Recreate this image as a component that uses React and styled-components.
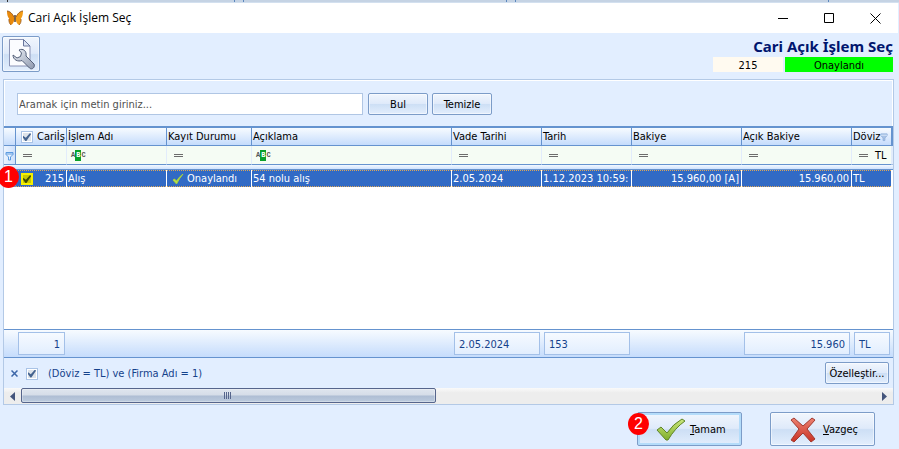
import React from 'react';
import styled, { createGlobalStyle, css } from 'styled-components';

const GlobalStyle = createGlobalStyle`
  *, *::before, *::after {
    box-sizing: border-box;
  }

  body {
    margin: 0;
    background: #e2eeff;
    color: #000;
    font: 11px/14px "DejaVu Sans Condensed", "DejaVu Sans", sans-serif;
  }

  button, input {
    font: inherit;
    color: inherit;
    margin: 0;
  }
`;

const COLUMNS = [
  { key: 'id', title: 'Cariİş', width: 51, align: 'right', value: '215', summary: '1', checkbox: true },
  { key: 'name', title: 'İşlem Adı', width: 100, value: 'Alış', filter: 'text' },
  { key: 'status', title: 'Kayıt Durumu', width: 85, value: 'Onaylandı', tick: true },
  { key: 'description', title: 'Açıklama', width: 200, value: '54 nolu alış', filter: 'text' },
  { key: 'due', title: 'Vade Tarihi', width: 90, value: '2.05.2024', summary: '2.05.2024' },
  { key: 'date', title: 'Tarih', width: 90, value: '1.12.2023 10:59:', summary: '153' },
  { key: 'balance', title: 'Bakiye', width: 110, align: 'right', value: '15.960,00 [A]' },
  { key: 'open', title: 'Açık Bakiye', width: 110, align: 'right', value: '15.960,00', summary: '15.960' },
  { key: 'currency', title: 'Döviz', width: 40, value: 'TL', summary: 'TL', filterValue: 'TL', filtered: true }
];

const Page = styled.div`
  display: flex;
  flex-direction: column;
  min-height: 100vh;
  padding-right: 1px;
`;

const Backdrop = styled.div`
  display: flex;
  gap: 8px;
  height: 3px;
  margin-right: -1px;
  padding-left: 7px;
  background: #c5d3e4;
  border-bottom: 1px solid #d3e0ef;
`;

const BackdropTab = styled.div`
  flex: 0 0 ${(props) => props.$width}px;
  border-right: 1px solid #5c87bd;
  border-left: 1px solid ${(props) => props.$edge || '#5c87bd'};
`;

const TitleBar = styled.header`
  display: flex;
  align-items: center;
  height: 30px;
  padding-left: 7px;
  gap: 5px;
  background: #fff;
`;

const WindowTitle = styled.span`
  flex: 1;
  font: 12px/16px "Open Sans", "Noto Sans", sans-serif;
`;

const WindowControls = styled.div`
  display: flex;
`;

const WindowButton = styled.button`
  display: flex;
  align-items: center;
  justify-content: center;
  width: 46px;
  height: 30px;
  padding: 0;
  border: 0;
  background: none;
`;

const Toolbar = styled.div`
  display: flex;
  justify-content: space-between;
  height: 46px;
  padding: 3px 5px 0 2px;
`;

const buttonFace = css`
  border: 1px solid #7c9cc8;
  border-radius: 2px;
  background: linear-gradient(#f1f6fd 0%, #dfeafa 48%, #cddff5 52%, #e3eefd 100%);
  box-shadow: inset 0 0 0 1px rgba(255, 255, 255, 0.5);
`;

const ToolButton = styled.button`
  ${buttonFace}
  display: flex;
  align-items: center;
  justify-content: center;
  width: 38px;
  height: 36px;
  padding: 0;
`;

const Heading = styled.div`
  display: flex;
  flex-direction: column;
  width: 180px;
`;

const HeadingTitle = styled.h1`
  margin: 0;
  color: #00156e;
  font: bold 15px/21px "Noto Sans", "Open Sans", sans-serif;
  text-align: right;
  white-space: nowrap;
`;

const Tags = styled.div`
  display: flex;
  gap: 2px;
`;

const Tag = styled.div`
  flex: ${(props) => props.$flex};
  height: 15px;
  background: ${(props) => props.$color};
  line-height: 17px;
  text-align: center;
`;

const Panel = styled.main`
  flex: 1;
  display: flex;
  flex-direction: column;
  margin: 0 4px 0 3px;
  border: 1px solid #b3c9e6;
`;

const SearchBar = styled.form`
  display: flex;
  gap: 4px;
  height: 46px;
  padding: 13px 13px 0;
  box-shadow: inset -1px 1px #fff, inset 1px 0 #fff;
`;

const SearchInput = styled.input`
  width: 346px;
  height: 22px;
  margin-right: 1px;
  padding: 0 1px;
  border: 1px solid #b0c6e4;
  background: #fff;

  &::placeholder {
    color: #505050;
    opacity: 1;
  }
`;

const Button = styled.button`
  ${buttonFace}
  width: ${(props) => props.$width}px;
  height: 22px;
  padding: 1px 0 0;
  white-space: nowrap;
`;

const GridArea = styled.div`
  position: relative;
  flex: 1;
  border-top: 2px solid #6593cf;
  background: #fff;
`;

const GridClip = styled.div`
  overflow: hidden;
`;

const Table = styled.table`
  width: 100%;
  border-spacing: 0;
  table-layout: fixed;

  th, td {
    padding: 0;
    overflow: hidden;
    font-weight: normal;
    white-space: nowrap;
  }
`;

const HeaderCell = styled.th`
  height: 18px;
  border-right: 1px solid #6593cf;
  border-bottom: 1px solid #6593cf;
  background: linear-gradient(#f7fbff, #c5dcfc);
  text-align: left;
`;

const CellContent = styled.div`
  display: flex;
  align-items: center;
  justify-content: ${(props) => props.$align === 'right' ? 'flex-end' : 'flex-start'};
  gap: ${(props) => props.$gap || 0}px;
  padding: 1px ${(props) => props.$right || 0}px 0 ${(props) => props.$left || 0}px;
  overflow: hidden;
`;

const FilterCell = styled.td`
  height: 19px;
  border-right: 1px solid #e2ecfb;
  border-bottom: 1px solid #6593cf;
  background: #f5fcf4;
`;

const IndicatorCell = styled(FilterCell)`
  border-right-color: #6593cf;
  background: linear-gradient(90deg, #eaf3ff, #cfe1fb);
`;

const BandCell = styled.td`
  height: 5px;
  border-bottom: 1px solid #6593cf;
  background: linear-gradient(#f2f8ff, #cfe2fd);
`;

const dots = 'repeating-linear-gradient(90deg, #dca658 0 1px, #316ac5 1px 2px)';

const DataCell = styled.td`
  height: 17px;
  border-right: 1px solid #fff;
  background:
    ${dots} top / 100% 1px no-repeat,
    ${dots} bottom / 100% 1px no-repeat,
    #316ac5;
  color: #fff;
`;

const RowIndicatorCell = styled.td`
  height: 17px;
  border-right: 1px solid #6593cf;
  border-bottom: 1px solid #6593cf;
  background: linear-gradient(90deg, #eaf3ff, #cfe1fb);
`;

const TextOperator = styled.span`
  display: flex;
  align-items: center;
  color: #555;
  font: bold 7px/9px "Liberation Mono", monospace;
`;

const OperatorLetter = styled.span`
  padding: 0 1px;
  background: #0aa02a;
  color: #fff;
  line-height: 11px;
`;

const EqualsOperator = styled.span`
  width: 9px;
  height: 3px;
  border: solid #6c6c6c;
  border-width: 1px 0;
`;

const Checkbox = styled.input.attrs({ type: 'checkbox' })`
  appearance: none;
  flex: none;
  display: grid;
  place-items: center;
  width: 12px;
  height: 12px;
  border: 1px solid #a9c3e6;
  background: #dde3ea;
  box-shadow: inset 0 0 0 1px #fff;

  &:checked::after {
    content: "";
    width: 8px;
    height: 8px;
    background: #44638f;
    clip-path: polygon(0 35%, 35% 60%, 88% 0, 100% 15%, 42% 100%, 30% 100%, 0 60%);
  }

  ${(props) => props.$marked && css`
    border-color: #f5f000;
    background: #c8c800;
    box-shadow: inset 0 0 0 1px #f5f000;

    &:checked::after {
      background: #3c4c00;
    }
  `}
`;

const SummaryTable = styled(Table)`
  border: solid #6593cf;
  border-width: 1px 0;
  background: linear-gradient(#f7fbff, #c5dcfc);
`;

const SummaryCell = styled.td`
  height: 27px;
`;

const SummaryBox = styled.div`
  height: 23px;
  margin: 0 2px;
  padding: 0 4px;
  border: 1px solid #a3c0e8;
  background: linear-gradient(#f6faff, #e2eefe);
  color: #15428b;
  line-height: 23px;
  text-align: ${(props) => props.$align || 'left'};
`;

const FilterBar = styled.div`
  display: flex;
  align-items: center;
  gap: 8px;
  height: 30px;
  padding: 0 4px 0 7px;
  color: #15428b;
`;

const FilterLabel = styled.label`
  flex: 1;
  display: flex;
  align-items: center;
  gap: 10px;
  padding-top: 1px;
`;

const CloseButton = styled.button`
  display: flex;
  padding: 0;
  border: 0;
  background: none;
`;

const CustomizeButton = styled(Button)`
  color: #000;
`;

const ScrollBar = styled.div`
  display: flex;
  height: 16px;
  background: linear-gradient(#fafafa, #ededed 30%);
`;

const ScrollArrow = styled.button`
  display: flex;
  align-items: center;
  justify-content: center;
  width: 17px;
  height: 16px;
  padding: 0;
  border: 0;
  background: none;
`;

const ScrollTrack = styled.div`
  flex: 1;
`;

const ScrollThumb = styled.div`
  display: flex;
  align-items: center;
  justify-content: center;
  width: 48.5%;
  height: 15px;
  border: 1px solid #56658c;
  border-radius: 2px;
  background: linear-gradient(#dfe5ee 0%, #d5dde8 48%, #aebdd3 52%, #bccbde 100%);
  box-shadow: inset 0 0 0 1px rgba(255, 255, 255, 0.3);
`;

const Actions = styled.footer`
  display: flex;
  justify-content: flex-end;
  gap: 28px;
  height: 44px;
  padding: 7px 23px 0 0;
`;

const ActionSlot = styled.div`
  position: relative;
`;

const ActionButton = styled.button`
  ${buttonFace}
  display: flex;
  align-items: center;
  gap: 4px;
  width: 105px;
  height: 34px;
  padding: 1px 0 0 18px;

  ${(props) => props.$primary && css`
    box-shadow: inset 0 0 0 2px #b4dcfa;
  `}
`;

const StepMarker = styled.span`
  position: absolute;
  top: ${(props) => props.$top}px;
  left: ${(props) => props.$left}px;
  width: 21px;
  height: 22px;
  border-radius: 50%;
  background: #f00;
  color: #fff;
  font: 16px/22px "Liberation Sans", sans-serif;
  text-align: center;
`;

const ButterflyIcon = () => (
  <svg width="16" height="16" viewBox="0 0 16 16">
    <path d="M7.5 8C6 4 3 1 0 1c0 3 .5 6 2 7.5C1.500 11 2.500 14 4 15c2-1 3.500-4 3.500-7z" fill="#e8890c" />
    <path d="M8.5 8C10 4 13 1 16 1c0 3-.5 6-2 7.5.5 2.500-.5 5.500-2 6.500-2-1-3.500-4-3.500-7z" fill="#f39c17" />
    <path d="M0 1c3 0 5.500 3 7 6M16 1c-3 0-5.500 3-7 6" stroke="#8a4a12" fill="none" strokeWidth=".8" />
    <path d="M2 9c-.5 2 .5 5 2 6M14 9c.5 2-.5 5-2 6" stroke="#8a4a12" fill="none" strokeWidth=".7" />
    <path d="M8 5v7" stroke="#3e2413" strokeWidth="1.3" />
  </svg>
);

const SettingsIcon = () => (
  <svg width="28" height="32" viewBox="0 0 28 32">
    <defs>
      <linearGradient id="wrench" x1="0" y1="0" x2="1" y2="1">
        <stop offset="0" stopColor="#eef1f7" />
        <stop offset="1" stopColor="#8d98ae" />
      </linearGradient>
    </defs>
    <path d="M2.5 1.5h14l6.5 6.5v20h-20.500z" fill="#fbfcff" stroke="#8a93b5" />
    <path d="M16.5 1.5v6.500h6.500z" fill="#dde5f4" stroke="#6a769d" />
    <path
      d="M12 12C16 10 20 13 19 18L27 26C28.500 29 25 32.500 22.500 30L15 22.500C11 24 6 22 6 17L10 20L13.500 18.500L14.500 15Z"
      fill="url(#wrench)"
      stroke="#535f79"
      strokeLinejoin="round"
    />
  </svg>
);

const FunnelIcon = ({ filled }) => (
  <svg width={filled ? 8 : 9} height="10" viewBox="0 0 9 10">
    <path d="M1 1.5h7v2L5.5 6v3h-2V6L1 3.500z" fill={filled ? '#a9c3e6' : '#e6f1ff'} stroke={filled ? '#8fb0dc' : '#5c9be0'} />
    <path d="M1 3h7" stroke={filled ? '#dce9fa' : '#5c9be0'} />
  </svg>
);

const SmallTickIcon = () => (
  <svg width="12" height="12" viewBox="0 0 12 12">
    <path d="M1 7l1.5-1L4.500 8Q7 4 11 1 7.500 5 4.500 11z" fill="#b9e04a" stroke="#a5d23e" strokeWidth="1" />
  </svg>
);

const AcceptIcon = () => (
  <svg width="30" height="24" viewBox="0 0 30 24">
    <defs>
      <linearGradient id="accept" x1="0" y1="0" x2="0" y2="1">
        <stop offset="0" stopColor="#cbe77c" />
        <stop offset="1" stopColor="#7fae2c" />
      </linearGradient>
    </defs>
    <path d="M1 12l4-3 6 6Q17 6 26 1l3 2Q19 10 12 22h-2z" fill="url(#accept)" stroke="#5f8428" strokeLinejoin="round" />
  </svg>
);

const CancelIcon = () => (
  <svg width="30" height="26" viewBox="0 0 30 26">
    <defs>
      <linearGradient id="cancel" x1="0" y1="0" x2="0" y2="1">
        <stop offset="0" stopColor="#ec8272" />
        <stop offset="1" stopColor="#c93225" />
      </linearGradient>
    </defs>
    <path d="M2 3l3-2 9 8 9-8 3 2-8 9 8 10-4 3-8-9-9 9-3-2 8-11z" fill="url(#cancel)" stroke="#a23a30" strokeLinejoin="round" />
  </svg>
);

const ColumnWidths = () => (
  <colgroup>
    <col width="12" />
    {COLUMNS.map(({ key, width }) => <col key={key} width={width} />)}
    <col />
  </colgroup>
);

const renderFilter = ({ filter, filterValue }) => (
  <CellContent $left={filter === 'text' ? 4 : 7} $gap={7}>
    {filter === 'text' ? (
      <TextOperator>A<OperatorLetter>B</OperatorLetter>C</TextOperator>
    ) : <EqualsOperator />}
    {filterValue}
  </CellContent>
);

const Grid = () => (
  <GridArea>
    <GridClip>
      <Table>
        <ColumnWidths />
        <thead>
          <tr>
            <HeaderCell />
            {COLUMNS.map(({ key, title, checkbox, filtered }) => (
              <HeaderCell key={key} scope="col">
                <CellContent $left={checkbox ? 5 : 1} $gap={checkbox ? 4 : 0}>
                  {checkbox && <Checkbox defaultChecked aria-label="Tümünü seç" />}
                  <span>{title}</span>
                  {filtered && <FunnelIcon filled />}
                </CellContent>
              </HeaderCell>
            ))}
            <HeaderCell />
          </tr>
        </thead>
        <tbody>
          <tr>
            <IndicatorCell>
              <CellContent $left={1}><FunnelIcon /></CellContent>
            </IndicatorCell>
            {COLUMNS.map((column) => (
              <FilterCell key={column.key}>{renderFilter(column)}</FilterCell>
            ))}
            <FilterCell />
          </tr>
          <tr>
            <BandCell colSpan={COLUMNS.length + 2} />
          </tr>
          <tr>
            <RowIndicatorCell />
            {COLUMNS.map(({ key, value, align, checkbox, tick }) => (
              <DataCell key={key}>
                <CellContent
                  $align={align}
                  $left={checkbox || tick ? 5 : 1}
                  $right={align ? 2 : 0}
                  $gap={checkbox ? 12 : 3}
                >
                  {checkbox && <Checkbox defaultChecked $marked aria-label="Satırı seç" />}
                  {tick && <SmallTickIcon />}
                  {value}
                </CellContent>
              </DataCell>
            ))}
            <DataCell />
          </tr>
        </tbody>
      </Table>
    </GridClip>
    <StepMarker $top={38} $left={-6}>1</StepMarker>
  </GridArea>
);

const Summary = () => (
  <SummaryTable>
    <ColumnWidths />
    <tbody>
      <tr>
        <SummaryCell />
        {COLUMNS.map(({ key, summary, align }) => (
          <SummaryCell key={key}>
            {summary && <SummaryBox $align={align}>{summary}</SummaryBox>}
          </SummaryCell>
        ))}
        <SummaryCell />
      </tr>
    </tbody>
  </SummaryTable>
);

const App = () => (
  <Page>
    <GlobalStyle />
    <Backdrop>
      <BackdropTab $width={228} $edge="#333" />
      <BackdropTab $width={264} />
      <BackdropTab $width={314} />
    </Backdrop>
    <TitleBar>
      <ButterflyIcon />
      <WindowTitle>Cari Açık İşlem Seç</WindowTitle>
      <WindowControls>
        <WindowButton aria-label="Simge durumuna küçült">
          <svg width="11" height="11"><path d="M0 5.5h10" stroke="#000" /></svg>
        </WindowButton>
        <WindowButton aria-label="Ekranı kapla">
          <svg width="11" height="11"><path d="M.5 .5h9v9h-9z" stroke="#000" fill="none" /></svg>
        </WindowButton>
        <WindowButton aria-label="Kapat">
          <svg width="11" height="11"><path d="M.5 .5l10 10M10.5 .5l-10 10" stroke="#000" /></svg>
        </WindowButton>
      </WindowControls>
    </TitleBar>
    <Toolbar>
      <ToolButton aria-label="Ayarlar"><SettingsIcon /></ToolButton>
      <Heading>
        <HeadingTitle>Cari Açık İşlem Seç</HeadingTitle>
        <Tags>
          <Tag $flex="0 0 70px" $color="#fffaf0">215</Tag>
          <Tag $flex="1" $color="#0f0">Onaylandı</Tag>
        </Tags>
      </Heading>
    </Toolbar>
    <Panel>
      <SearchBar>
        <SearchInput type="text" aria-label="Arama" placeholder="Aramak için metin giriniz..." />
        <Button type="button" $width={60}>Bul</Button>
        <Button type="button" $width={60}>Temizle</Button>
      </SearchBar>
      <Grid />
      <Summary />
      <FilterBar>
        <CloseButton aria-label="Filtreyi kaldır">
          <svg width="7" height="7"><path d="M.5 .5l6 6M6.5 .5l-6 6" stroke="#3c66a8" strokeWidth="1.5" /></svg>
        </CloseButton>
        <FilterLabel>
          <Checkbox defaultChecked />
          (Döviz = TL) ve (Firma Adı = 1)
        </FilterLabel>
        <CustomizeButton $width={64}>Özelleştir...</CustomizeButton>
      </FilterBar>
      <ScrollBar>
        <ScrollArrow aria-label="Sola kaydır">
          <svg width="5" height="9"><path d="M5 0v9L0 4.5z" fill="#44557c" /></svg>
        </ScrollArrow>
        <ScrollTrack>
          <ScrollThumb>
            <svg width="8" height="7"><path d="M.5 0v7M2.5 0v7M4.5 0v7M6.5 0v7" stroke="#56658c" /></svg>
          </ScrollThumb>
        </ScrollTrack>
        <ScrollArrow aria-label="Sağa kaydır">
          <svg width="5" height="9"><path d="M0 0v9l5-4.500z" fill="#44557c" /></svg>
        </ScrollArrow>
      </ScrollBar>
    </Panel>
    <Actions>
      <ActionSlot>
        <ActionButton $primary>
          <AcceptIcon />
          <span><u>T</u>amam</span>
        </ActionButton>
        <StepMarker $top={1} $left={-9}>2</StepMarker>
      </ActionSlot>
      <ActionButton>
        <CancelIcon />
        <span><u>V</u>azgeç</span>
      </ActionButton>
    </Actions>
  </Page>
);

export default App;
